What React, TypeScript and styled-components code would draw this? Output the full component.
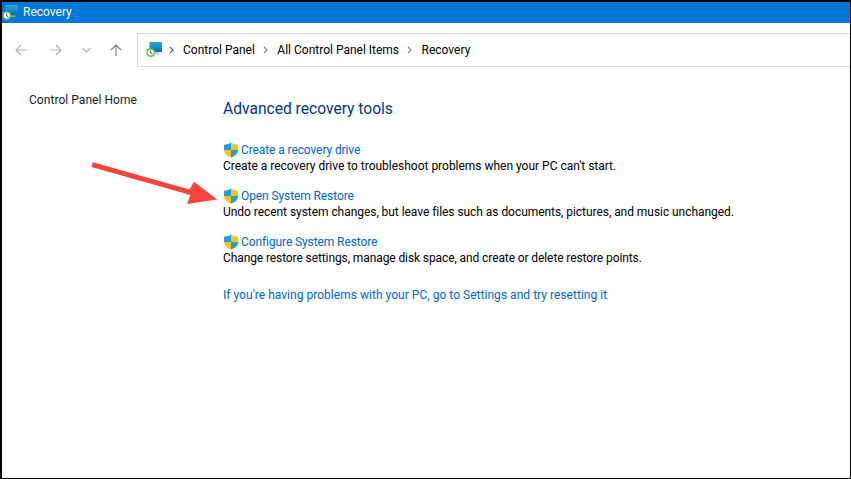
import styled, { createGlobalStyle } from 'styled-components';

const GlobalStyle = createGlobalStyle`
    html, body {
        margin: 0;
        padding: 0;
        background: #000000;
        overflow: hidden;
    }
`;

const Frame = styled.div`
    position: relative;
    box-sizing: border-box;
    width: 851px;
    height: 479px;
    border-style: solid;
    border-color: #000000;
    border-width: 2px 1px 1px 2px;
    background: #ffffff;
    display: flex;
    flex-direction: column;
    font-family: Roboto, "Noto Sans", sans-serif;
    font-size: 12px;
    color: #000000;
`;

const TitleBar = styled.div`
    height: 21px;
    background: #0078d7;
    color: #ffffff;
    display: flex;
    align-items: center;
    gap: 5px;
`;

const TitleText = styled.span`
    font-size: 12px;
    line-height: 21px;
`;

const Toolbar = styled.div`
    height: 34px;
    margin-top: 10px;
    display: flex;
    align-items: center;
`;

const NavButtons = styled.div`
    width: 135px;
    flex: none;
    display: flex;
    align-items: center;
    padding-left: 13px;
    box-sizing: border-box;
`;

const NavButton = styled.div<{ $width: number }>`
    width: ${(p) => p.$width}px;
    height: 16px;
    display: flex;
    align-items: center;
`;

const AddressBar = styled.div`
    flex: 1;
    height: 34px;
    box-sizing: border-box;
    border: 1px solid #d9d9d9;
    border-right: none;
    display: flex;
    align-items: center;
    padding-left: 8px;
`;

const AddressIcon = styled.span`
    display: flex;
    margin-right: -1.5px;
`;

const Crumb = styled.span`
    font-size: 12px;
    line-height: 16px;
`;

const Chevron = styled.svg`
    margin: 0 9.5px 0 8px;
    flex: none;
`;

const Body = styled.div`
    flex: 1;
    display: flex;
`;

const Sidebar = styled.div`
    width: 221px;
    flex: none;
    padding: 25px 0 0 27px;
    box-sizing: border-box;
    line-height: 16px;
    letter-spacing: 0.05px;
    color: #1a1a2e;
`;

const Content = styled.div`
    flex: 1;
    padding-top: 32px;
`;

const Heading = styled.div`
    font-size: 15.6px;
    line-height: 20px;
    color: #003399;
    margin-bottom: 23px;
`;

const Task = styled.div`
    height: 46px;
`;

const TaskLink = styled.div`
    display: flex;
    align-items: center;
    gap: 2px;
    height: 16px;
    color: #0066cc;
    line-height: 16px;
    letter-spacing: -0.1px;
`;

const TaskText = styled.div<{ $tracking: number }>`
    line-height: 16px;
    letter-spacing: ${(p) => p.$tracking}px;
`;

const ResetLink = styled.div`
    color: #0066cc;
    line-height: 16px;
    letter-spacing: 0.03px;
    margin-top: 7px;
`;

const ArrowOverlay = styled.svg`
    position: absolute;
    left: -2px;
    top: -2px;
    pointer-events: none;
`;

function Shield() {
    return (
        <svg width="16" height="16" viewBox="0 0 16 16">
            <path d="M8 .6C6 2 3.8 2.7 1 2.8V8h7z" fill="#1f9bea" />
            <path d="M8 .6c2 1.4 4.2 2.1 7 2.2V8H8z" fill="#fdc40f" />
            <path d="M8 8h7c0 3.7-2.8 6-7 7.5z" fill="#1f9bea" />
            <path d="M8 8H1c0 3.7 2.8 6 7 7.5z" fill="#fdc40f" />
        </svg>
    );
}

function RecoveryIcon() {
    return (
        <svg width="16" height="16" viewBox="0 0 16 16">
            <defs>
                <linearGradient id="screen" x1="0" y1="0" x2="0" y2="1">
                    <stop offset="0" stopColor="#27a9e6" />
                    <stop offset="1" stopColor="#0f6fa8" />
                </linearGradient>
            </defs>
            <rect x="3.5" y="0" width="12.5" height="10" fill="url(#screen)" />
            <rect x="7" y="10.5" width="6.5" height="1.2" fill="#a9b4bb" />
            <circle cx="4.7" cy="10.6" r="3.7" fill="#ffffff" stroke="#5cc04a" strokeWidth="1.4" />
            <path d="M4.7 8.4v2.4l1.7 1.1" fill="none" stroke="#3a3a3a" strokeWidth="0.9" />
            <path d="M0 6.8l3 .4-2 2.4z" fill="#5cc04a" />
        </svg>
    );
}

function NavArrow({ dir, color }: { dir: 'left' | 'right' | 'up'; color: string }) {
    const d = dir === 'left'
        ? 'M12 6H1M6 1 1 6l5 5'
        : dir === 'right'
            ? 'M0 6h11M6 1l5 5-5 5'
            : 'M6 12V1M1 6l5-5 5 5';
    return (
        <svg width="12" height="12" viewBox="0 0 12 12">
            <path d={d} fill="none" stroke={color} strokeWidth="1.1" />
        </svg>
    );
}

function CrumbChevron({ color }: { color: string }) {
    return (
        <Chevron width="5" height="8" viewBox="0 0 5 8">
            <path d="M1 1l3 3-3 3" fill="none" stroke={color} strokeWidth="1.1" />
        </Chevron>
    );
}

const tasks = [
    { link: 'Create a recovery drive', tracking: -0.013, text: "Create a recovery drive to troubleshoot problems when your PC can't start." },
    { link: 'Open System Restore', tracking: -0.05, text: 'Undo recent system changes, but leave files such as documents, pictures, and music unchanged.' },
    { link: 'Configure System Restore', tracking: -0.1, text: 'Change restore settings, manage disk space, and create or delete restore points.' },
];

export default function App() {
    return (
        <>
            <GlobalStyle />
            <Frame>
                <TitleBar>
                    <RecoveryIcon />
                    <TitleText>Recovery</TitleText>
                </TitleBar>
                <Toolbar>
                    <NavButtons>
                        <NavButton $width={35}><NavArrow dir="left" color="#b3b3b3" /></NavButton>
                        <NavButton $width={32}><NavArrow dir="right" color="#b3b3b3" /></NavButton>
                        <NavButton $width={28}>
                            <svg width="9" height="6" viewBox="0 0 9 6">
                                <path d="M.5 1l4 4 4-4" fill="none" stroke="#b3b3b3" strokeWidth="1.1" />
                            </svg>
                        </NavButton>
                        <NavButton $width={20}><NavArrow dir="up" color="#7a7a7a" /></NavButton>
                    </NavButtons>
                    <AddressBar>
                        <AddressIcon><RecoveryIcon /></AddressIcon>
                        <CrumbChevron color="#555555" />
                        <Crumb>Control Panel</Crumb>
                        <CrumbChevron color="#808080" />
                        <Crumb>All Control Panel Items</Crumb>
                        <CrumbChevron color="#808080" />
                        <Crumb>Recovery</Crumb>
                    </AddressBar>
                </Toolbar>
                <Body>
                    <Sidebar>Control Panel Home</Sidebar>
                    <Content>
                        <Heading>Advanced recovery tools</Heading>
                        {tasks.map((t) => (
                            <Task key={t.link}>
                                <TaskLink><Shield />{t.link}</TaskLink>
                                <TaskText $tracking={t.tracking}>{t.text}</TaskText>
                            </Task>
                        ))}
                        <ResetLink>If you're having problems with your PC, go to Settings and try resetting it</ResetLink>
                    </Content>
                </Body>
                <ArrowOverlay width="851" height="479" viewBox="0 0 851 479">
                    <path d="M92.8 162.3 189.5 189.5 194 181.8 217 199.5 187 204 190.5 195 91.5 167z" fill="#f8433a" />
                </ArrowOverlay>
            </Frame>
        </>
    );
}
